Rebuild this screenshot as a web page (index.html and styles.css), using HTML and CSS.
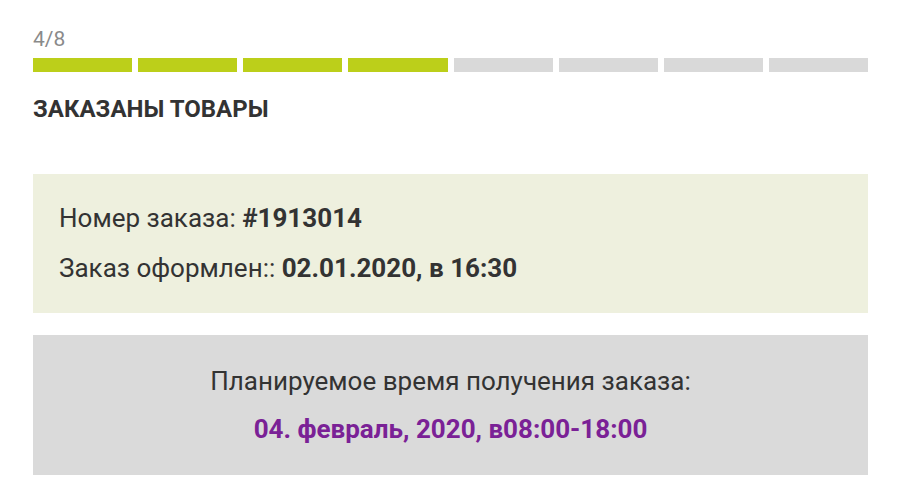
FILE: index.html
```html
<!DOCTYPE html>
<html lang="ru">
<head>
    <meta charset="UTF-8">
    <meta name="viewport" content="width=device-width, initial-scale=1.0">
    <title>Статус заказа</title>
    <link rel="stylesheet" href="styles.css">
</head>
<body>
    <div class="page">
        <div class="step-count">4/8</div>
        <div class="steps">
            <div class="step done"></div>
            <div class="step done"></div>
            <div class="step done"></div>
            <div class="step done"></div>
            <div class="step"></div>
            <div class="step"></div>
            <div class="step"></div>
            <div class="step"></div>
        </div>
        <h1 class="status-title">ЗАКАЗАНЫ ТОВАРЫ</h1>

        <div class="order-info">
            <p>Номер заказа: <b>#1913014</b></p>
            <p>Заказ оформлен:: <b>02.01.2020, в 16:30</b></p>
        </div>

        <div class="pickup">
            <p>Планируемое время получения заказа:</p>
            <p class="pickup-date">04. февраль, 2020, в08:00-18:00</p>
        </div>
    </div>
</body>
</html>
```

FILE: styles.css
```css
body {
    font-family: Roboto, "Noto Sans", sans-serif;
    margin: 0;
    color: #333;
    background-color: #fff;
}

.page {
    width: 835px;
    padding: 27px 0 0 33px;
}

.step-count {
    font-size: 21px;
    line-height: 24px;
    color: #8a8a8a;
}

.steps {
    display: flex;
    gap: 6px;
    margin-top: 7px;
}

.step {
    flex: 1;
    height: 14px;
    background-color: #d9d9d9;
}

.step.done {
    background-color: #bccf1a;
}

.status-title {
    font-size: 24px;
    font-weight: bold;
    line-height: 28px;
    margin: 23px 0 0;
}

.order-info {
    background-color: #eef0de;
    margin-top: 51px;
    padding: 29px 26px 0;
    height: 139px;
    box-sizing: border-box;
}

.order-info p {
    font-size: 26px;
    line-height: 30px;
    margin: 0 0 20px;
}

.pickup {
    background-color: #dadada;
    margin-top: 22px;
    height: 140px;
    text-align: center;
    padding-top: 31px;
    box-sizing: border-box;
}

.pickup p {
    font-size: 26px;
    line-height: 30px;
    margin: 0 0 18px;
}

.pickup-date {
    font-weight: bold;
    color: #7a2196;
}
```
